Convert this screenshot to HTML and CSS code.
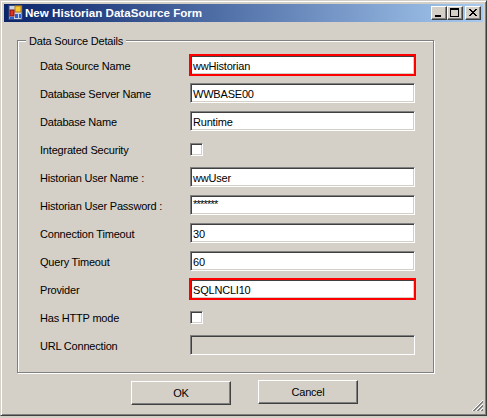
FILE: index.html
```html
<!DOCTYPE html>
<html>
<head>
<meta charset="utf-8">
<title>New Historian DataSource Form</title>
<link rel="stylesheet" href="styles.css">
</head>
<body>
<div class="window">
  <div class="titlebar">
    <svg class="app-icon" width="16" height="16" viewBox="0 0 16 16">
      <rect x="2" y="0.5" width="13" height="14" fill="#c8d4e8" stroke="#3a4a7a" stroke-width="1"/>
      <rect x="8" y="1" width="6" height="6" fill="#f8c830" stroke="#b07810" stroke-width="1"/>
      <rect x="3" y="5" width="4" height="6" fill="#e03020" stroke="#801010" stroke-width="1"/>
      <rect x="8" y="9" width="3" height="4" fill="#3060d0"/>
      <rect x="12" y="9" width="2" height="4" fill="#3060d0"/>
      <rect x="3" y="12" width="4" height="2" fill="#3060d0"/>
    </svg>
    <span class="title">New Historian DataSource Form</span>
    <div class="caption-buttons">
      <div class="cap-btn">
        <svg width="14" height="12" viewBox="0 0 14 12"><rect x="3" y="8" width="6" height="2" fill="#000"/></svg>
      </div>
      <div class="cap-btn">
        <svg width="14" height="12" viewBox="0 0 14 12">
          <rect x="2" y="1" width="9" height="2" fill="#000"/>
          <rect x="2" y="1" width="1" height="9" fill="#000"/>
          <rect x="10" y="1" width="1" height="9" fill="#000"/>
          <rect x="2" y="9" width="9" height="1" fill="#000"/>
        </svg>
      </div>
      <div class="cap-btn close">
        <svg width="14" height="12" viewBox="0 0 14 12" fill="#000">
          <rect x="3" y="2" width="2" height="1"/><rect x="9" y="2" width="2" height="1"/>
          <rect x="4" y="3" width="2" height="1"/><rect x="8" y="3" width="2" height="1"/>
          <rect x="5" y="4" width="4" height="1"/>
          <rect x="6" y="5" width="2" height="1"/>
          <rect x="5" y="6" width="4" height="1"/>
          <rect x="4" y="7" width="2" height="1"/><rect x="8" y="7" width="2" height="1"/>
          <rect x="3" y="8" width="2" height="1"/><rect x="9" y="8" width="2" height="1"/>
        </svg>
      </div>
    </div>
  </div>
  <div class="client">
    <div class="group">
      <span class="legend">Data Source Details</span>
      <div class="fields">
        <div class="label">Data Source Name</div>
        <div class="textbox flag">wwHistorian</div>
        <div class="label">Database Server Name</div>
        <div class="textbox">WWBASE00</div>
        <div class="label">Database Name</div>
        <div class="textbox">Runtime</div>
        <div class="label">Integrated Security</div>
        <div class="checkcell"><div class="checkbox"></div></div>
        <div class="label">Historian User Name :</div>
        <div class="textbox">wwUser</div>
        <div class="label">Historian User Password :</div>
        <div class="textbox password">*******</div>
        <div class="label">Connection Timeout</div>
        <div class="textbox">30</div>
        <div class="label">Query Timeout</div>
        <div class="textbox">60</div>
        <div class="label">Provider</div>
        <div class="textbox flag">SQLNCLI10</div>
        <div class="label">Has HTTP mode</div>
        <div class="checkcell"><div class="checkbox"></div></div>
        <div class="label">URL Connection</div>
        <div class="textbox disabled"></div>
      </div>
    </div>
    <div class="buttons">
      <div class="button ok">OK</div>
      <div class="button">Cancel</div>
    </div>
    <svg class="grip" width="12" height="12" viewBox="0 0 12 12" shape-rendering="crispEdges">
      <g stroke-width="1">
        <path d="M11.5 0.5 L0.5 11.5" stroke="#fff"/>
        <path d="M11.5 1.5 L1.5 11.5 M11.5 2.5 L2.5 11.5" stroke="#808080"/>
        <path d="M11.5 4.5 L4.5 11.5" stroke="#fff"/>
        <path d="M11.5 5.5 L5.5 11.5 M11.5 6.5 L6.5 11.5" stroke="#808080"/>
        <path d="M11.5 8.5 L8.5 11.5" stroke="#fff"/>
        <path d="M11.5 9.5 L9.5 11.5 M11.5 10.5 L10.5 11.5" stroke="#808080"/>
      </g>
    </svg>
  </div>
</div>
</body>
</html>
```

FILE: styles.css
```css
html, body {
  margin: 0;
  padding: 0;
  background: #d4d0c8;
}

body {
  font-family: "Liberation Sans", Arial, sans-serif;
  font-size: 11px;
  color: #000;
  letter-spacing: -0.2px;
}

.window {
  width: 487px;
  height: 416px;
  box-sizing: border-box;
  background: #d4d0c8;
  border: 1px solid;
  border-color: #d4d0c8 #404040 #404040 #d4d0c8;
  box-shadow: inset 1px 1px 0 #fff, inset -1px -1px 0 #808080;
  padding: 3px;
  display: flex;
  flex-direction: column;
}

.titlebar {
  height: 18px;
  flex: none;
  display: flex;
  align-items: center;
  background: linear-gradient(to right, #0a246a, #a6caf0);
  color: #fff;
}

.app-icon {
  flex: none;
  margin-left: 3px;
  margin-right: 2px;
  align-self: flex-start;
  margin-top: 1px;
}

.title {
  font-weight: bold;
  font-size: 11.6px;
  letter-spacing: 0;
  line-height: 18px;
  white-space: nowrap;
  flex: 1;
}

.caption-buttons {
  display: flex;
  margin-right: 2px;
}

.cap-btn {
  width: 16px;
  height: 14px;
  box-sizing: border-box;
  background: #d4d0c8;
  border: 1px solid;
  border-color: #fff #404040 #404040 #fff;
  box-shadow: inset -1px -1px 0 #808080;
}

.cap-btn svg {
  display: block;
}

.cap-btn.close {
  margin-left: 2px;
}

.client {
  position: relative;
  flex: 1;
  margin-top: 1px;
}

.group {
  position: relative;
  width: 417px;
  height: 333px;
  box-sizing: border-box;
  margin: 17px 0 0 13px;
  border: 1px solid #808080;
  box-shadow: inset 1px 1px 0 #fff, 1px 1px 0 #fff;
  padding: 14px 0 0 22px;
}

.legend {
  position: absolute;
  top: -7px;
  left: 8px;
  padding: 0 3px;
  line-height: 15px;
  background: #d4d0c8;
  white-space: nowrap;
}

.fields {
  display: grid;
  grid-template-columns: 150px 225px;
  grid-auto-rows: 20px;
  row-gap: 8px;
}

.label {
  line-height: 22px;
  white-space: nowrap;
}

.textbox {
  height: 20px;
  box-sizing: border-box;
  background: #fff;
  border: 1px solid;
  border-color: #808080 #fff #fff #808080;
  box-shadow: inset 1px 1px 0 #404040, inset -1px -1px 0 #d4d0c8;
  padding: 0 2px;
  line-height: 20px;
  white-space: nowrap;
  overflow: hidden;
}

.textbox.flag {
  outline: 2px solid #ff0000;
  outline-offset: -1px;
}

.textbox.password {
  letter-spacing: -0.8px;
  line-height: 16px;
}

.textbox.disabled {
  background: #d4d0c8;
}

.checkcell {
  display: flex;
  align-items: center;
}

.checkbox {
  width: 13px;
  height: 13px;
  box-sizing: border-box;
  background: #fff;
  border: 1px solid;
  border-color: #808080 #fff #fff #808080;
  box-shadow: inset 1px 1px 0 #404040, inset -1px -1px 0 #d4d0c8;
}

.buttons {
  display: flex;
  align-items: flex-start;
  gap: 27px;
  margin-top: 7px;
  padding-left: 127px;
}

.button {
  width: 100px;
  height: 24px;
  box-sizing: border-box;
  border: 1px solid;
  border-color: #fff #404040 #404040 #fff;
  box-shadow: inset -1px -1px 0 #808080;
  text-align: center;
  line-height: 22px;
}

.button.ok {
  margin-top: 1px;
}

.grip {
  position: absolute;
  right: 0;
  bottom: 0;
}
```
